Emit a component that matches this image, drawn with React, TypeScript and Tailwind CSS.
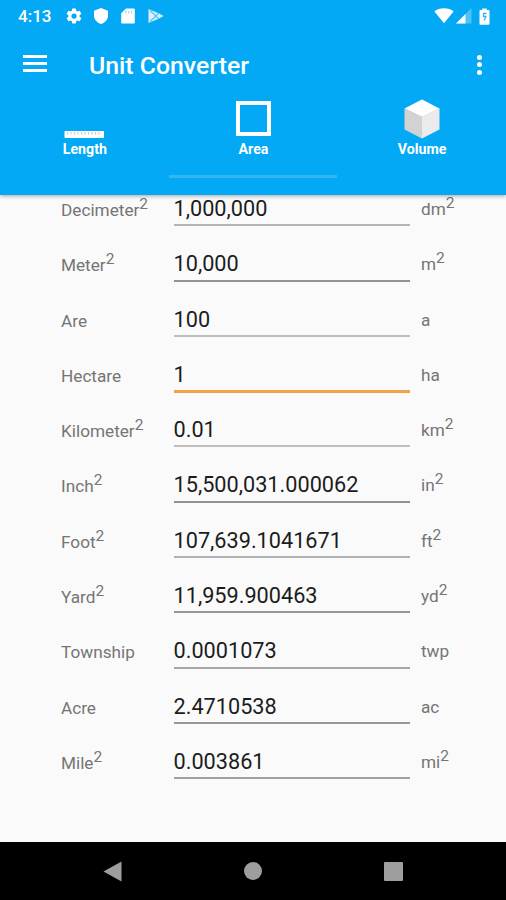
import { useState } from 'react';

interface Unit {
  name: string;
  symbol: string;
  squared?: boolean;
  value: string;
  line: string;
}

const UNITS: Unit[] = [
  { name: 'Decimeter', symbol: 'dm', squared: true, value: '1,000,000', line: 'bg-[#b4b4b4]' },
  { name: 'Meter', symbol: 'm', squared: true, value: '10,000', line: 'bg-[#929292]' },
  { name: 'Are', symbol: 'a', value: '100', line: 'bg-[#bebebe]' },
  { name: 'Hectare', symbol: 'ha', value: '1', line: 'bg-[#979797]' },
  { name: 'Kilometer', symbol: 'km', squared: true, value: '0.01', line: 'bg-[#bebebe]' },
  { name: 'Inch', symbol: 'in', squared: true, value: '15,500,031.000062', line: 'bg-[#929292]' },
  { name: 'Foot', symbol: 'ft', squared: true, value: '107,639.1041671', line: 'bg-[#b2b2b2]' },
  { name: 'Yard', symbol: 'yd', squared: true, value: '11,959.900463', line: 'bg-[#979797]' },
  { name: 'Township', symbol: 'twp', value: '0.0001073', line: 'bg-[#a6a6a6]' },
  { name: 'Acre', symbol: 'ac', value: '2.4710538', line: 'bg-[#979797]' },
  { name: 'Mile', symbol: 'mi', squared: true, value: '0.003861', line: 'bg-[#a0a0a0]' },
];

function RulerIcon() {
  return (
    <svg width="40" height="9" viewBox="0 0 40 9">
      <rect x="0.5" y="1" width="39.500" height="7" rx="0.8" fill="#fff" />
      <path
        d="M3.5 2v2.500M7 2v2.500M10.5 2v2.500M14 2v2.500M17.5 2v2.500M21 2v2.500M24.5 2v2.500M28 2v2.500M31.5 2v2.500M35 2v2.500"
        stroke="#b4c4cc"
        strokeWidth="0.9"
      />
    </svg>
  );
}

function CubeIcon() {
  return (
    <svg width="36" height="40" viewBox="0 0 36 40">
      <path d="M18 0.5 35.5 9.5 18 18 0.5 9.5Z" fill="#fff" />
      <path d="M0.5 9.3 18 17.6V39.5L0.5 30.5Z" fill="#d2d2d2" />
      <path d="M35.5 9.3 18 17.6V39.5L35.5 30.5Z" fill="#ebebeb" />
    </svg>
  );
}

function StatusBar() {
  return (
    <div className="flex h-8 items-center pr-[16px] pl-[18px] text-white">
      <span className="w-[48px] text-[17px] leading-8 font-medium">4:13</span>
      <svg className="-ml-[1px]" width="18" height="18" viewBox="0 0 24 24" fill="currentColor">
        <path d="M19.43 12.98c.04-.32.07-.64.07-.98s-.03-.66-.07-.98l2.11-1.65a.5.5 0 0 0 .12-.64l-2-3.46a.5.5 0 0 0-.61-.22l-2.49 1a7.3 7.3 0 0 0-1.69-.98l-.38-2.65A.49.49 0 0 0 14 2h-4a.49.49 0 0 0-.49.42l-.38 2.65c-.61.25-1.17.59-1.69.98l-2.49-1a.5.5 0 0 0-.61.22l-2 3.46a.5.5 0 0 0 .12.64l2.11 1.65c-.04.32-.07.65-.07.98s.03.66.07.98l-2.11 1.65a.5.5 0 0 0-.12.64l2 3.46c.12.22.39.3.61.22l2.49-1c.52.4 1.08.73 1.69.98l.38 2.65c.03.24.24.42.49.42h4c.25 0 .46-.18.49-.42l.38-2.65a7.7 7.7 0 0 0 1.69-.98l2.49 1c.23.09.49 0 .61-.22l2-3.46a.5.5 0 0 0-.12-.64zM12 15.5a3.5 3.5 0 1 1 0-7 3.5 3.5 0 0 1 0 7z" />
      </svg>
      <svg className="ml-[11px]" width="14" height="16" viewBox="0 0 14 16" fill="currentColor">
        <path d="M7 0 14 2.8v5c0 3.8-3 7-7 8.2-4-1.2-7-4.4-7-8.2v-5z" />
      </svg>
      <svg className="ml-[13px]" width="14" height="16" viewBox="0 0 14 16">
        <path d="M5 0.5h7.5c.8 0 1.3.5 1.3 1.3v12.4c0 .8-.5 1.3-1.3 1.3h-11C.7 15.5.2 15 .2 14.2V5.3z" fill="currentColor" />
        <path d="M4.8 3v2.6M7.6 3v2.6M10.4 3v2.6" stroke="#a3dcfa" strokeWidth="1.3" />
      </svg>
      <svg className="ml-[13px]" width="16" height="16" viewBox="0 0 16 16">
        <path d="M0.5 1 11 5.5 15.5 8 11 10.5 0.5 15Z" fill="#fff" fillOpacity="0.85" />
        <path d="M2 2.500 10.500 10.5M2 13.500 10.500 5.5" stroke="#4fc0f7" strokeWidth="1.1" />
      </svg>
      <div className="ml-auto flex items-center">
        <svg width="20" height="16" viewBox="0 0 20 16" fill="currentColor">
          <path d="M0.3 3.3C3 1.2 6.3.2 10 .2s7 1 9.700 3.1L10 15.2z" />
        </svg>
        <svg className="ml-[2px]" width="16" height="16" viewBox="0 0 16 16" fill="currentColor">
          <path d="M15.5 0v15.5H0z" fillOpacity="0.3" />
          <path d="M9.5 6v9.5H0z" />
        </svg>
        <svg className="ml-[7px]" width="11" height="17" viewBox="0 0 11 17">
          <path d="M3.2 0.5h4.600v1.600h1.700c.6 0 1 .4 1 1v12.700c0 .5-.4.9-1 .9h-8c-.6 0-1-.4-1-.9V3.100c0-.6.4-1 1-1h1.700z" fill="currentColor" />
          <path d="M7.500 5.500H4.500v3h2.300l-1.500 4" fill="none" stroke="#39b4f5" strokeWidth="1.3" />
        </svg>
      </div>
    </div>
  );
}

const TABS = [
  { label: 'Length', icon: <RulerIcon /> },
  { label: 'Area', icon: <span className="mb-[3px] ml-[1px] block h-[35px] w-[35px] border-4 border-white" /> },
  { label: 'Volume', icon: <CubeIcon /> },
];

export default function App() {
  const [tab, setTab] = useState('Area');
  const [focused, setFocused] = useState('Hectare');

  return (
    <div className="flex h-[900px] w-[506px] flex-col overflow-hidden bg-[#fafafa] font-[Roboto,sans-serif]">
      <header className="relative z-10 h-[195px] shrink-0 bg-[#03a9f4] text-white shadow-[0_1px_4px_rgba(0,0,0,0.35)]">
        <StatusBar />
        <div className="flex h-[66px] items-center">
          <button className="mb-[3px] ml-[23px] flex w-[24px] flex-col gap-[4px]" aria-label="Menu">
            <span className="h-[3px] w-full bg-white" />
            <span className="h-[3px] w-full bg-white" />
            <span className="h-[3px] w-full bg-white" />
          </button>
          <h1 className="mt-[2px] ml-[42px] text-[24.8px] leading-[30px] font-medium">Unit Converter</h1>
          <button className="mr-[24px] mb-[1px] ml-auto flex flex-col gap-[2.5px]" aria-label="More">
            <span className="h-[5px] w-[5px] rounded-full bg-white" />
            <span className="h-[5px] w-[5px] rounded-full bg-white" />
            <span className="h-[5px] w-[5px] rounded-full bg-white" />
          </button>
        </div>
        <nav className="grid h-[80px] grid-cols-3">
          {TABS.map((t) => (
            <button
              key={t.label}
              onClick={() => setTab(t.label)}
              className={`flex flex-col items-center border-b-[3px] ${tab === t.label ? 'border-[#35b5ee]' : 'border-transparent'}`}
            >
              <span className="flex h-[41px] items-end">{t.icon}</span>
              <span className="pl-px text-[14.2px] leading-[21px] font-bold">{t.label}</span>
            </button>
          ))}
        </nav>
      </header>

      <main className="min-h-0 flex-1 overflow-hidden">
        <div className="-mt-[24px]">
          {UNITS.map((u) => (
            <div key={u.name} className="flex h-[55.3px] pl-[61px] text-[17.2px] text-[#757575]">
              <span className="w-[112.5px] pt-[24px] leading-[30px]">
                {u.name}
                {u.squared && <sup className="-top-[7px] text-[15.5px] leading-none">2</sup>}
              </span>
              <div className="flex w-[236.5px] flex-col" onClick={() => setFocused(u.name)}>
                <span className="pt-[23px] text-[21.7px] leading-[30px] text-[#1c1c1c]">{u.value}</span>
                <span
                  className={`mt-auto shrink-0 ${focused === u.name ? 'h-[3px] bg-[#f4a24a]' : `h-[2px] ${u.line}`}`}
                />
              </div>
              <span className="ml-[11px] pt-[23px] leading-[30px]">
                {u.symbol}
                {u.squared && <sup className="-top-[7px] text-[15.5px] leading-none">2</sup>}
              </span>
            </div>
          ))}
        </div>
      </main>

      <footer className="flex h-[58px] shrink-0 items-center bg-black">
        <svg className="ml-[103px]" width="19" height="21" viewBox="0 0 19 21">
          <path d="M0.5 10.5 18.5 0.5v20z" fill="#9e9e9e" />
        </svg>
        <span className="ml-[122px] h-[18px] w-[18px] rounded-full bg-[#9e9e9e]" />
        <span className="ml-[122px] h-[19px] w-[19px] rounded-[1px] bg-[#9e9e9e]" />
      </footer>
    </div>
  );
}
